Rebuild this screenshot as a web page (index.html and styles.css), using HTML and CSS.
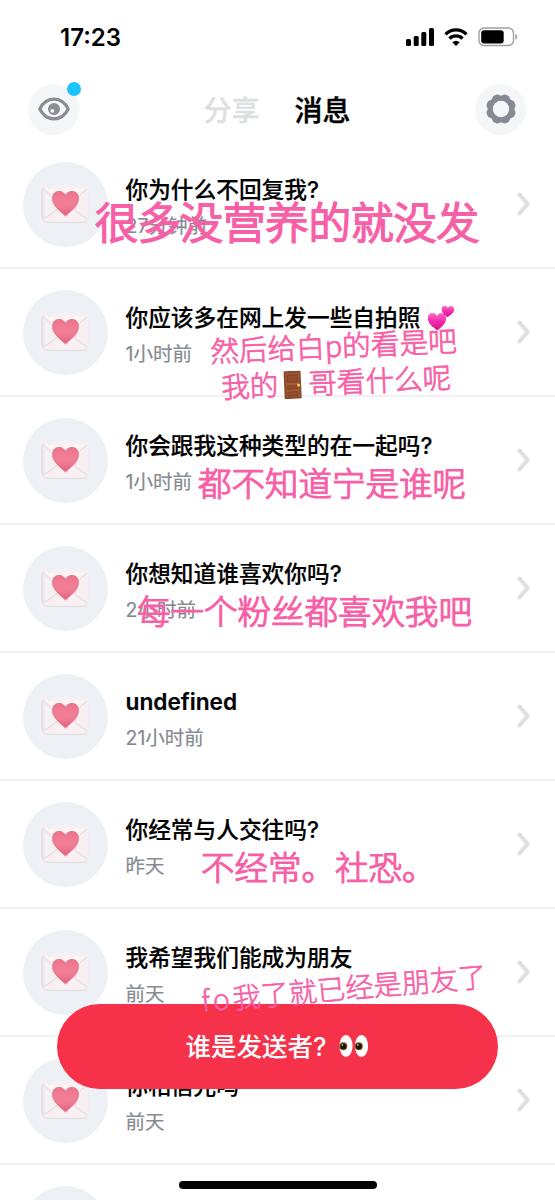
FILE: index.html
```
<!DOCTYPE html>
<html lang="zh-CN">
<head>
  <meta charset="UTF-8">
  <title>消息</title>
  <link rel="stylesheet" href="styles.css">
</head>
<body>
  <svg width="0" height="0" class="defs">
    <defs>
      <linearGradient id="heartFill" x1="0" y1="0" x2="0" y2="1">
        <stop offset="0" stop-color="#ee7590"/>
        <stop offset="0.55" stop-color="#f17f93"/>
        <stop offset="1" stop-color="#e2607d"/>
      </linearGradient>
      <linearGradient id="paper" x1="0" y1="0" x2="1" y2="0">
        <stop offset="0" stop-color="#e3dadd"/>
        <stop offset="0.08" stop-color="#f7f0f2"/>
        <stop offset="1" stop-color="#f8eff1"/>
      </linearGradient>
      <linearGradient id="pinkHeart" x1="0" y1="0" x2="0" y2="1">
        <stop offset="0" stop-color="#ff6fc5"/>
        <stop offset="0.45" stop-color="#f22fae"/>
        <stop offset="1" stop-color="#d8108f"/>
      </linearGradient>
    </defs>
    <symbol id="letter" viewBox="0 0 48 40">
      <rect x="0.500" y="2" width="47" height="37" rx="6" fill="#e3dcdf"/>
      <rect x="0.500" y="1" width="47" height="37" rx="6" fill="url(#paper)"/>
      <path d="M3 35L18 24M46 35L31 24" stroke="#e6dcdf" stroke-width="1.200" fill="none"/>
      <path d="M2.500 5L19 18.500Q24 22 29 18.500L46 5" stroke="#e9e0e3" stroke-width="1.300" fill="#fbf5f6"/>
      <path d="M24.500 32C20 27.500 11.500 22.500 11.500 14.500C11.500 9.800 14.500 7.300 18 7.300C21 7.300 23.300 9 24.500 11.200C25.700 9 28 7.300 31 7.300C34.500 7.300 37.500 9.800 37.500 14.500C37.500 22.500 29 27.500 24.500 32Z" fill="url(#heartFill)" stroke="#e26a86" stroke-width="0.700"/>
    </symbol>
    <symbol id="chevron" viewBox="0 0 14 24">
      <path d="M2.500 2.500L10.800 12L2.500 21.500" fill="none" stroke="#dddfe3" stroke-width="4" stroke-linecap="round" stroke-linejoin="round"/>
    </symbol>
  </svg>

  <div class="status">
    <span class="clock">17:23</span>
    <div class="status-icons">
      <svg width="28" height="18" viewBox="0 0 28 18">
        <rect x="0" y="11" width="5" height="7" rx="1.500"/>
        <rect x="7.700" y="8" width="5" height="10" rx="1.500"/>
        <rect x="15.300" y="4" width="5" height="14" rx="1.500"/>
        <rect x="23" y="0" width="5" height="18" rx="1.500"/>
      </svg>
      <svg width="24" height="18" viewBox="0 0 24 18">
        <path d="M1.500 6.300A14.800 14.800 0 0 1 22.500 6.300M5.400 10.700A9.200 9.200 0 0 1 18.600 10.700" fill="none" stroke="#000" stroke-width="3.300"/>
        <path d="M12 18L8.200 14.200A6 6 0 0 1 15.800 14.200Z"/>
      </svg>
      <svg width="40" height="20" viewBox="0 0 40 20">
        <rect x="1" y="1" width="34.500" height="17.500" rx="5" fill="none" stroke="#a0a0a0" stroke-width="1.400"/>
        <rect x="3.200" y="3.200" width="22.500" height="13.200" rx="3" />
        <path d="M37.300 6.700Q39.300 7.500 39.300 9.700Q39.300 12 37.300 12.800Z" fill="#a0a0a0"/>
      </svg>
    </div>
  </div>

  <div class="header">
    <div class="round-btn">
      <svg width="32" height="24" viewBox="0 0 32 24">
        <path d="M1.800 12C5 5.500 10 2.200 16 2.200S27 5.500 30.200 12C27 18.500 22 21.800 16 21.800S5 18.500 1.800 12Z" fill="none" stroke="#8a8d94" stroke-width="3.200" stroke-linejoin="round"/>
        <circle cx="16" cy="12" r="6" fill="#8a8d94"/>
        <circle cx="14.300" cy="13.800" r="1.900" fill="#f5f6f8"/>
      </svg>
      <i class="dot"></i>
    </div>
    <div class="tabs">
      <span class="tab">分享</span>
      <span class="tab active">消息</span>
    </div>
    <div class="round-btn">
      <svg width="32" height="32" viewBox="-16 -16 32 32">
        <path d="M0 -11.700L3.600 -13L6.600 -11.800L8.300 -8.300L11.800 -6.600L13 -3.600L11.700 0L13 3.600L11.800 6.600L8.300 8.300L6.600 11.800L3.600 13L0 11.700L-3.600 13L-6.600 11.800L-8.300 8.300L-11.800 6.600L-13 3.600L-11.700 0L-13 -3.600L-11.800 -6.600L-8.300 -8.300L-6.600 -11.800L-3.600 -13Z" fill="#868a93" stroke="#868a93" stroke-width="3" stroke-linejoin="round"/>
        <circle r="8.200" fill="#f5f6f8"/>
      </svg>
    </div>
  </div>

  <div class="list">
    <div class="row">
      <div class="avatar"><svg><use href="#letter"/></svg></div>
      <div class="info">
        <div class="title">你为什么不回复我?</div>
        <div class="time">27分钟前</div>
      </div>
      <svg class="arrow"><use href="#chevron"/></svg>
      <div class="note note-1">很多没营养的就没发</div>
    </div>
    <div class="row">
      <div class="avatar"><svg><use href="#letter"/></svg></div>
      <div class="info">
        <div class="title">你应该多在网上发一些自拍照
          <svg class="hearts" viewBox="0 0 28 26">
            <path d="M10.500 25.500C5.500 22 0.800 18.500 0.800 13C0.800 7.500 7.800 6 10 11C12 6 19.200 7.300 19.200 13C19.200 18.500 14.500 22 10.500 25.500Z" fill="url(#pinkHeart)"/>
            <path d="M20.500 12.300C17.500 9.800 14.500 7.500 14.700 4C15 0.300 19.500 -0.300 20.900 3C22.600 -0.100 27.200 0.800 27.100 4.500C27 8 23.500 10 20.500 12.300Z" fill="url(#pinkHeart)"/>
          </svg>
        </div>
        <div class="time">1小时前</div>
      </div>
      <svg class="arrow"><use href="#chevron"/></svg>
      <div class="note note-2">然后给白p的看是吧</div>
      <div class="note note-3">我的<svg class="door" viewBox="0 0 20 28">
          <rect x="1" y="0" width="17" height="28" rx="0.500" fill="#8a4a2c"/>
          <rect x="3" y="2" width="13" height="24" fill="#a65b37"/>
          <path d="M4.500 4H14.500V11H4.500ZM4.500 15H14.500V18H4.500ZM4.500 21H14.500V25H4.500Z" fill="#96502f" stroke="#743b21" stroke-width="0.800"/>
          <circle cx="15.500" cy="14.500" r="1.600" fill="#f4c34b"/>
        </svg>哥看什么呢</div>
    </div>
    <div class="row">
      <div class="avatar"><svg><use href="#letter"/></svg></div>
      <div class="info">
        <div class="title">你会跟我这种类型的在一起吗?</div>
        <div class="time">1小时前</div>
      </div>
      <svg class="arrow"><use href="#chevron"/></svg>
      <div class="note note-4">都不知道宁是谁呢</div>
    </div>
    <div class="row">
      <div class="avatar"><svg><use href="#letter"/></svg></div>
      <div class="info">
        <div class="title">你想知道谁喜欢你吗?</div>
        <div class="time">2小时前</div>
      </div>
      <svg class="arrow"><use href="#chevron"/></svg>
      <div class="note note-5">每一个粉丝都喜欢我吧</div>
    </div>
    <div class="row">
      <div class="avatar"><svg><use href="#letter"/></svg></div>
      <div class="info">
        <div class="title latin">undefined</div>
        <div class="time">21小时前</div>
      </div>
      <svg class="arrow"><use href="#chevron"/></svg>
    </div>
    <div class="row">
      <div class="avatar"><svg><use href="#letter"/></svg></div>
      <div class="info">
        <div class="title">你经常与人交往吗?</div>
        <div class="time">昨天</div>
      </div>
      <svg class="arrow"><use href="#chevron"/></svg>
      <div class="note note-6">不经常。社恐。</div>
    </div>
    <div class="row">
      <div class="avatar"><svg><use href="#letter"/></svg></div>
      <div class="info">
        <div class="title">我希望我们能成为朋友</div>
        <div class="time">前天</div>
      </div>
      <svg class="arrow"><use href="#chevron"/></svg>
      <div class="note note-7"><span class="fo">fo</span>我了就已经是朋友了</div>
    </div>
    <div class="row">
      <div class="avatar"><svg><use href="#letter"/></svg></div>
      <div class="info">
        <div class="title">你相信光吗</div>
        <div class="time">前天</div>
      </div>
      <svg class="arrow"><use href="#chevron"/></svg>
    </div>
    <div class="row">
      <div class="avatar"></div>
    </div>
  </div>

  <div class="sender-btn">
    <span>谁是发送者?</span>
    <svg width="30" height="22" viewBox="0 0 30 22">
      <ellipse cx="7" cy="11" rx="6.600" ry="11" fill="#fff"/>
      <ellipse cx="22.500" cy="11" rx="6.600" ry="11" fill="#fff"/>
      <circle cx="4.300" cy="11.300" r="4" fill="#7a5518"/>
      <circle cx="19.800" cy="11.300" r="4" fill="#7a5518"/>
      <circle cx="4.300" cy="11.300" r="2.900" fill="#1c1208"/>
      <circle cx="19.800" cy="11.300" r="2.900" fill="#1c1208"/>
      <circle cx="3.400" cy="10" r="0.800" fill="#fff"/>
      <circle cx="18.900" cy="10" r="0.800" fill="#fff"/>
    </svg>
  </div>
  <div class="home-bar"></div>
</body>
</html>
```
FILE: styles.css
```
* {
  box-sizing: border-box;
}

body {
  position: relative;
  width: 555px;
  height: 1200px;
  margin: 0;
  overflow: hidden;
  background-color: #fff;
  color: #000;
  font-family: Inter, "Noto Sans CJK SC", sans-serif;
}

.defs {
  position: absolute;
}

/* 状态栏 */
.status {
  display: flex;
  justify-content: space-between;
  align-items: center;
  height: 74px;
  padding: 0 37px 0 60px;
}

.clock {
  font-size: 24px;
  font-weight: 600;
}

.status-icons {
  display: flex;
  align-items: center;
  gap: 10px;
}

/* 顶部导航 */
.header {
  display: flex;
  justify-content: space-between;
  align-items: center;
  height: 67px;
  padding: 3px 29px 0 28px;
}

.round-btn {
  position: relative;
  display: flex;
  align-items: center;
  justify-content: center;
  width: 51px;
  height: 51px;
  border-radius: 50%;
  background-color: #f5f6f8;
}

.dot {
  position: absolute;
  top: -2px;
  right: -2px;
  width: 14px;
  height: 14px;
  border-radius: 50%;
  background-color: #1dc3fb;
}

.tabs {
  display: flex;
  gap: 35px;
  padding-top: 3px;
}

.tab {
  color: #dddfe3;
  font-size: 28px;
  line-height: 40px;
  font-weight: 500;
  -webkit-text-stroke: 0.3px #dddfe3;
}

.tab.active {
  color: #000;
  -webkit-text-stroke: 0.4px #000;
}

/* 消息列表 */
.list {
  height: 1059px;
  overflow: hidden;
}

.row {
  position: relative;
  display: flex;
  align-items: center;
  height: 128px;
  padding: 0 24px 0 23px;
  border-bottom: 2px solid #f0f1f3;
}

.avatar {
  display: flex;
  align-items: center;
  justify-content: center;
  width: 85px;
  height: 85px;
  border-radius: 50%;
  background-color: #edf1f5;
}

.avatar svg {
  width: 48px;
  height: 40px;
  margin-right: 2px;
}

.info {
  flex: 1;
  margin-left: 17.500px;
  padding-top: 6px;
}

.title {
  font-size: 22.700px;
  line-height: 32px;
  font-weight: 500;
  white-space: nowrap;
  -webkit-text-stroke: 0.200px #000;
}

.latin {
  font-weight: 600;
}

.time {
  margin-top: 5px;
  color: #868a91;
  font-size: 19.500px;
  line-height: 30px;
  -webkit-text-stroke: 0.200px #868a91;
}

.arrow {
  width: 14px;
  height: 24px;
}

.hearts {
  width: 28px;
  height: 26px;
  vertical-align: -5px;
}

/* 粉色批注 */
.note {
  position: absolute;
  z-index: 3;
  color: #f75fa6;
  font-family: "Noto Sans CJK SC", sans-serif;
  font-weight: 300;
  line-height: 1.4;
  white-space: nowrap;
  -webkit-text-stroke: 1.200px #f75fa6;
  stroke-linejoin: round;
}

.note-1 {
  top: 50px;
  left: 95px;
  font-size: 42.700px;
  -webkit-text-stroke-width: 2px;
}

.note-2 {
  top: 56px;
  left: 210px;
  font-size: 28.700px;
  transform: rotate(-2.500deg);
  -webkit-text-stroke-width: 0.800px;
}

.note-3 {
  top: 92px;
  left: 221px;
  font-size: 28.600px;
  transform: rotate(-2.500deg);
  -webkit-text-stroke-width: 0.800px;
}

.door {
  width: 20px;
  height: 28px;
  margin: 0 5px;
  vertical-align: -4px;
}

.note-4 {
  top: 62px;
  left: 198px;
  font-size: 33.500px;
}

.note-5 {
  top: 62px;
  left: 137px;
  font-size: 33.500px;
}

.note-6 {
  top: 62px;
  left: 201px;
  font-size: 33.500px;
}

.note-7 {
  top: 58px;
  left: 201px;
  font-size: 28.300px;
  transform: rotate(-5deg);
  -webkit-text-stroke-width: 0.600px;
}

.fo {
  letter-spacing: 3px;
}

/* 底部按钮 */
.sender-btn {
  position: absolute;
  z-index: 2;
  top: 1004px;
  left: 57px;
  display: flex;
  align-items: center;
  justify-content: center;
  gap: 13px;
  width: 441px;
  height: 85px;
  padding-bottom: 2px;
  border-radius: 43px;
  background-color: #f5324a;
  color: #fff;
  font-size: 25.500px;
  font-weight: 500;
}

.sender-btn span {
  margin-top: -2px;
}

.home-bar {
  position: absolute;
  z-index: 2;
  top: 1181px;
  left: 179px;
  width: 198px;
  height: 8px;
  border-radius: 4px;
  background-color: #000;
}
```
